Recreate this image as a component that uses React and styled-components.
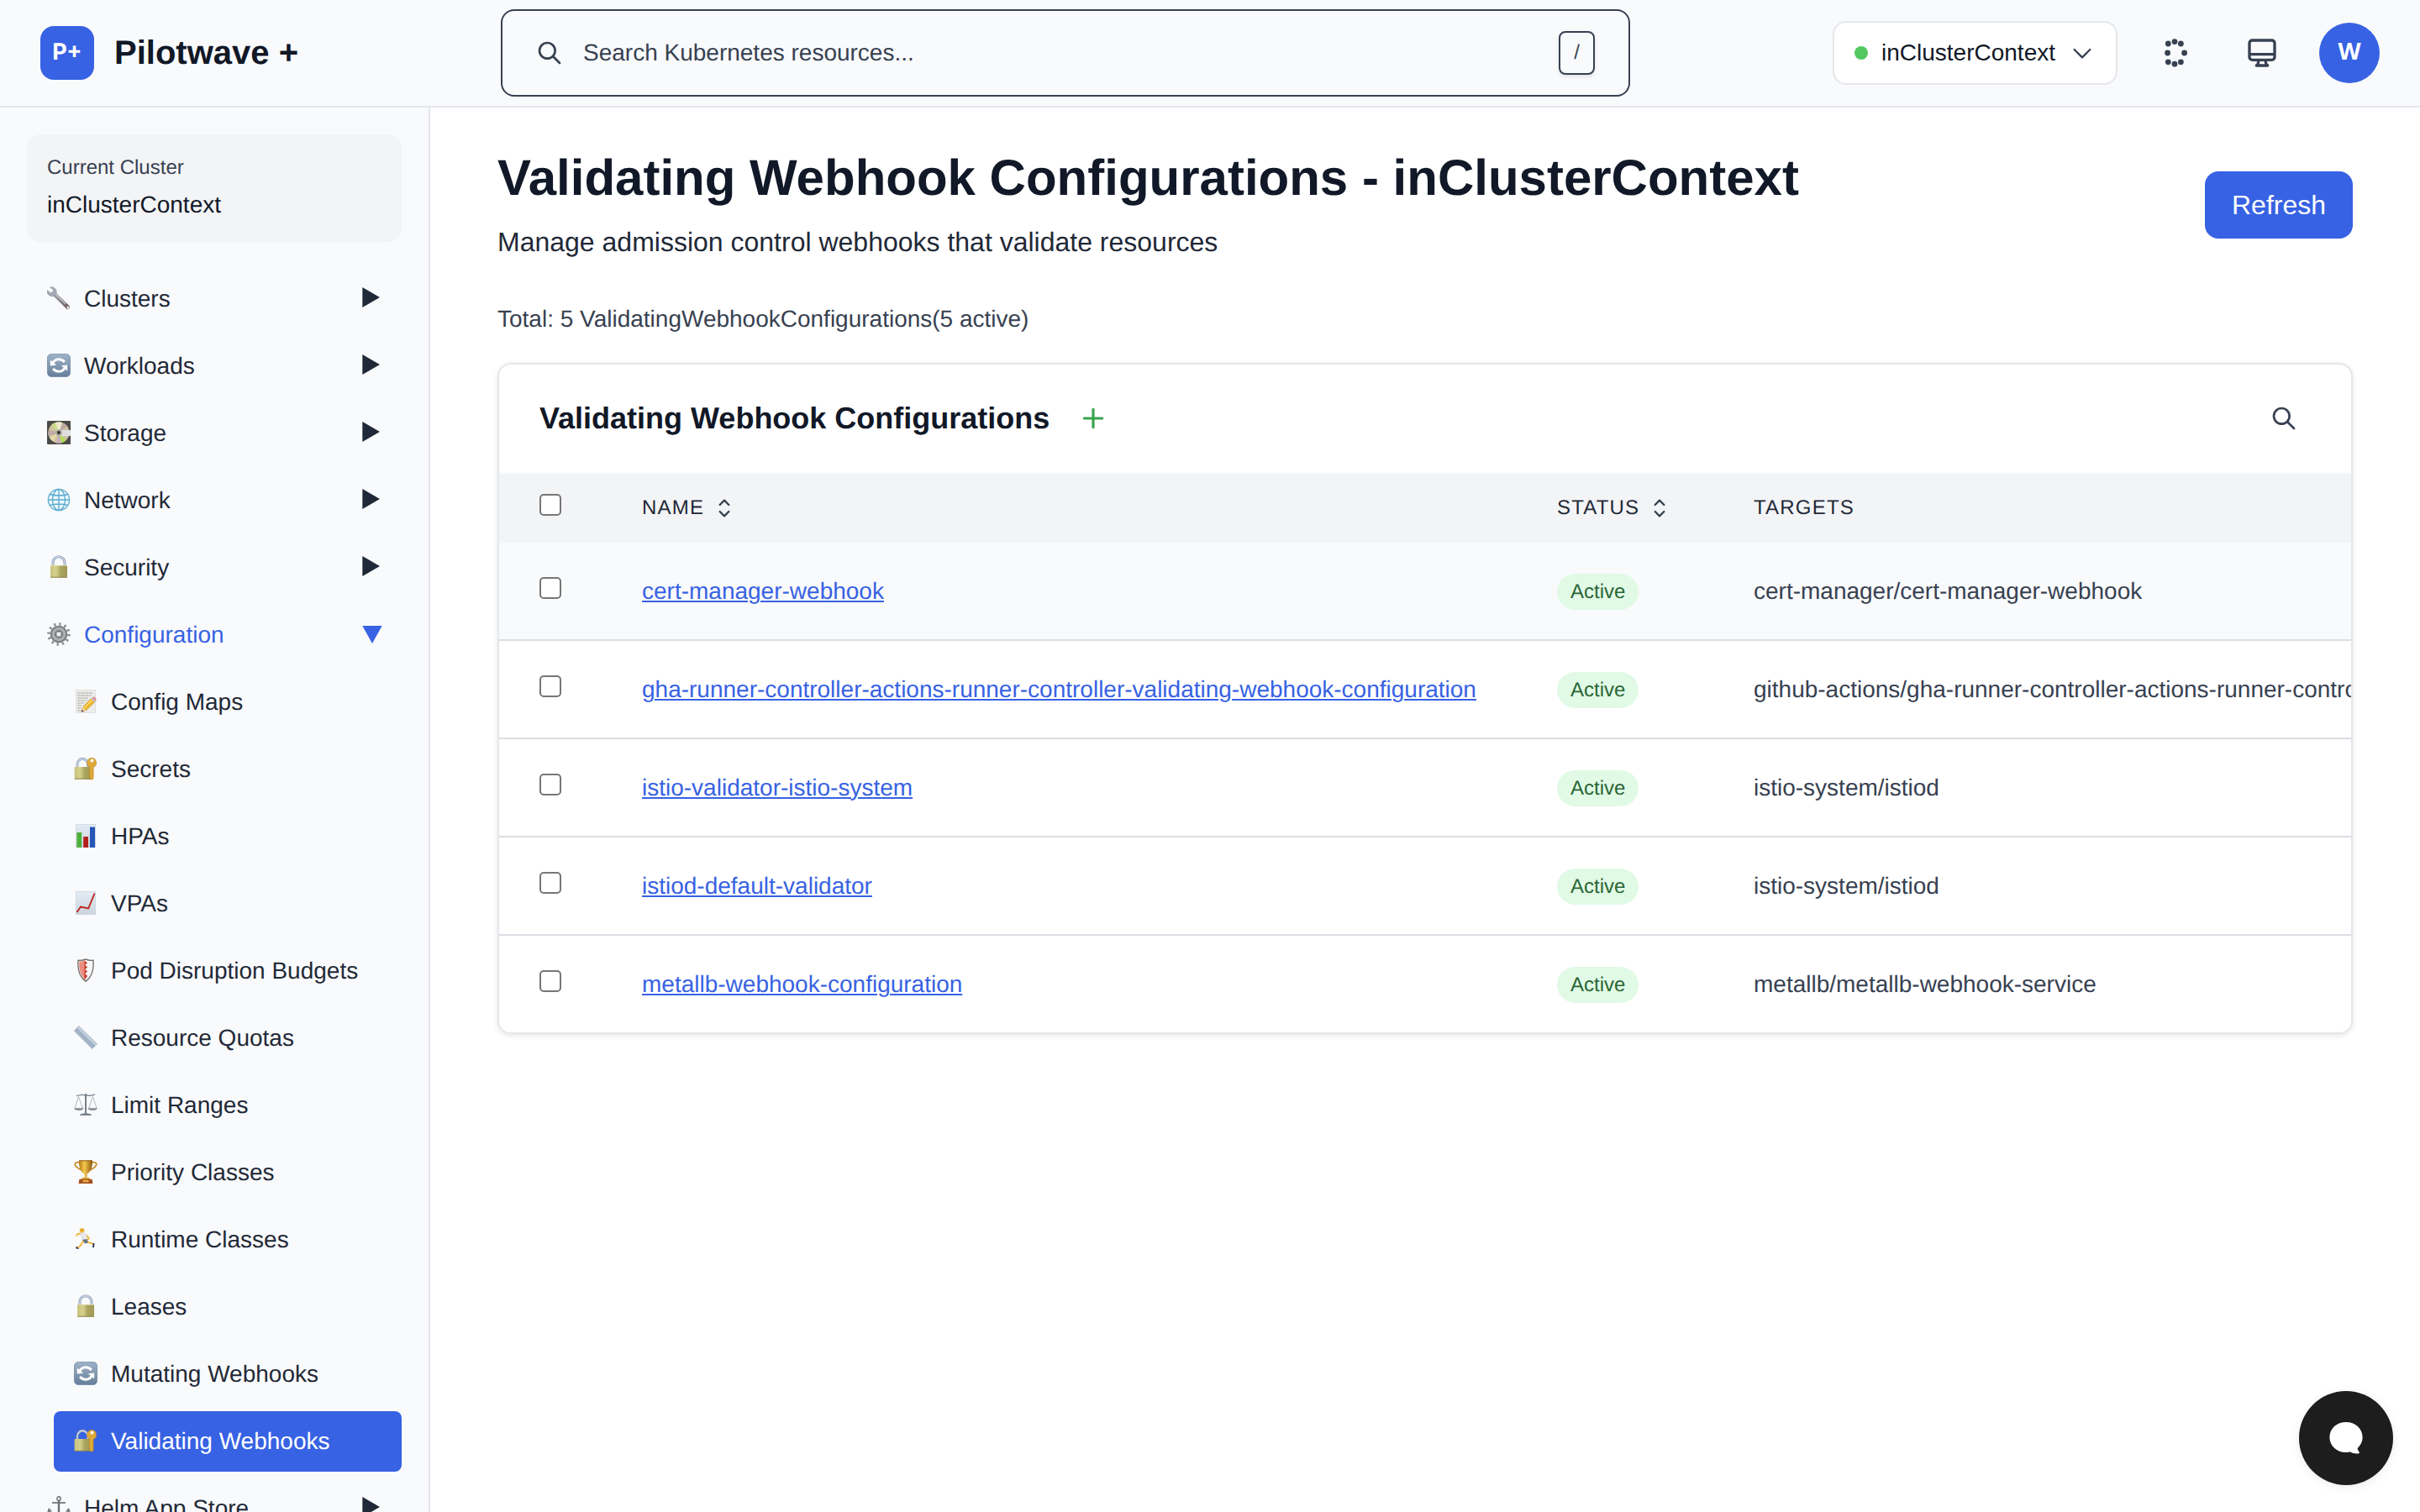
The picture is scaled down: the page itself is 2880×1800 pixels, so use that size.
import React from "react";
import styled, { createGlobalStyle, css } from "styled-components";

const GlobalStyle = createGlobalStyle`
  *, *::before, *::after { box-sizing: border-box; }
  html, body { margin: 0; padding: 0; background: #fff; }
  body {
    font-family: "Liberation Sans", Arial, sans-serif;
    font-size: 28px;
    line-height: 40px;
    color: #1f2937;
    text-rendering: geometricPrecision;
    -webkit-font-smoothing: antialiased;
  }
`;

const Shell = styled.div`
  display: flex;
  flex-direction: column;
  width: 100vw;
  height: 100vh;
  overflow: hidden;
`;

/* ---------- Top bar ---------- */

const TopBar = styled.header`
  display: flex;
  align-items: center;
  flex: none;
  height: 128px;
  padding: 0 48px;
  background: #f9fafc;
  border-bottom: 2px solid #e5e7eb;
`;

const Brand = styled.div`
  display: flex;
  align-items: center;
  gap: 24px;
`;

const LogoMark = styled.div`
  display: flex;
  align-items: center;
  justify-content: center;
  width: 64px;
  height: 64px;
  padding-bottom: 3px;
  border-radius: 16px;
  background: #3762e3;
  color: #fff;
  font: 700 27px/40px Inter, sans-serif;
`;

const BrandName = styled.span`
  font-size: 40px;
  line-height: 56px;
  font-weight: 700;
  color: #111827;
`;

const SearchArea = styled.div`
  display: flex;
  flex: 1;
  justify-content: center;
`;

const SearchField = styled.div`
  display: flex;
  align-items: center;
  gap: 24px;
  width: 1344px;
  height: 104px;
  padding: 0 40px;
  border: 2px solid #374151;
  border-radius: 16px;
  color: #374151;
`;

const SearchHint = styled.span`
  flex: 1;
`;

const Key = styled.kbd`
  display: flex;
  align-items: center;
  justify-content: center;
  width: 43px;
  height: 52px;
  padding-bottom: 1px;
  border: 2px solid #374151;
  border-radius: 8px;
  background: #f9fafc;
  box-shadow: 0 2px 4px rgba(0, 0, 0, 0.1);
  font: 24px/32px "Liberation Sans", Arial, sans-serif;
`;

const TopActions = styled.div`
  display: flex;
  align-items: center;
  gap: 32px;
`;

const ContextPicker = styled.button`
  display: flex;
  align-items: center;
  gap: 16px;
  height: 76px;
  margin: 0;
  padding: 0 24px;
  border: 2px solid #e5e7eb;
  border-radius: 16px;
  background: #fff;
  color: #374151;
  font: inherit;
`;

const ContextName = styled.span`
  color: #111827;
`;

const StatusDot = styled.span`
  width: 16px;
  height: 16px;
  border-radius: 50%;
  background: #51c860;
`;

const IconButton = styled.button`
  display: flex;
  padding: 16px;
  border: 0;
  background: none;
  color: #374151;
`;

const Avatar = styled.div`
  display: flex;
  align-items: center;
  justify-content: center;
  width: 72px;
  height: 72px;
  padding-bottom: 4px;
  border-radius: 50%;
  background: #3762e3;
  color: #fff;
  font: 700 28px/40px "Open Sans", sans-serif;
`;

/* ---------- Sidebar ---------- */

const Body = styled.div`
  display: flex;
  flex: 1;
  min-height: 0;
`;

const Sidebar = styled.aside`
  flex: none;
  width: 512px;
  padding: 32px;
  background: #f9fafc;
  border-right: 2px solid #e5e7eb;
  overflow: hidden;
`;

const ClusterCard = styled.div`
  height: 128px;
  margin-bottom: 32px;
  padding: 24px;
  border-radius: 16px;
  background: #f3f4f6;
`;

const ClusterLabel = styled.div`
  margin-bottom: 8px;
  font-size: 24px;
  line-height: 32px;
  color: #374151;
`;

const ClusterName = styled.div`
  color: #111827;
`;

const Nav = styled.nav`
  display: flex;
  flex-direction: column;
  gap: 8px;
`;

const NavRow = styled.a`
  display: flex;
  align-items: center;
  height: 72px;
  margin-left: ${(p) => (p.$nested ? "32px" : "0")};
  padding: 0 23px 0 24px;
  border-radius: 8px;
  color: ${(p) => (p.$open ? "#3762e3" : "#1f2937")};
  ${(p) =>
    p.$current &&
    css`
      background: #3762e3;
      color: #fff;
    `}
`;

const NavIcon = styled.svg`
  flex: none;
  width: 28px;
  height: 28px;
  margin: 0 16px 3px 0;
`;

const NavText = styled.span`
  flex: 1;
  white-space: nowrap;
`;

const Caret = styled.svg`
  flex: none;
  width: 24px;
  height: 24px;
  margin-bottom: 4px;
`;

/* ---------- Page ---------- */

const Page = styled.main`
  flex: 1;
  min-width: 0;
  padding: 48px 80px;
`;

const PageHead = styled.div`
  display: flex;
  align-items: center;
  justify-content: space-between;
  margin-bottom: 48px;
`;

const PageTitle = styled.h1`
  margin: 0 0 16px;
  font-size: 60px;
  line-height: 72px;
  font-weight: 700;
  color: #111827;
`;

const PageLead = styled.p`
  margin: 0;
  font-size: 32px;
  line-height: 48px;
`;

const RefreshButton = styled.button`
  height: 80px;
  width: 176px;
  padding: 0;
  border: 0;
  border-radius: 16px;
  background: #3762e3;
  color: #fff;
  font: 32px/48px "Liberation Sans", Arial, sans-serif;
`;

const Summary = styled.p`
  margin: 0 0 32px;
  color: #374151;
`;

const Card = styled.section`
  border: 2px solid #e5e7eb;
  border-radius: 16px;
  background: #fff;
  box-shadow: 0 2px 6px rgba(0, 0, 0, 0.1);
  overflow: hidden;
`;

const CardHead = styled.div`
  display: flex;
  align-items: center;
  height: 130px;
  padding: 0 64px 0 48px;
  border-bottom: 2px solid #f9fafb;
  color: #374151;
`;

const CardTitle = styled.h2`
  margin: 0 36px 0 0;
  font-size: 36px;
  line-height: 56px;
  font-weight: 700;
  color: #111827;
`;

const AddButton = styled.button`
  display: flex;
  margin-right: auto;
  padding: 0;
  border: 0;
  background: none;
  color: #38a44c;
`;

const tableColumns = css`
  display: grid;
  grid-template-columns: 122px 1089px 234px 1fr;
  padding-left: 48px;
`;

const HeadRow = styled.div`
  ${tableColumns}
  height: 82px;
  padding-top: 25px;
  background: #f3f4f6;
  font-size: 24px;
  line-height: 32px;
  letter-spacing: 0.05em;
`;

const HeadCell = styled.div`
  display: flex;
  align-items: center;
  gap: 8px;
  height: 32px;
  svg {
    color: #374151;
  }
`;

const Row = styled.div`
  ${tableColumns}
  height: 117px;
  padding-top: 38px;
  background: ${(p) => (p.$hovered ? "#f9fafc" : "#fff")};
  border-bottom: 2px solid #dcdde3;
  &:last-child {
    height: 115px;
    border-bottom: 0;
  }
`;

const Box = styled.input.attrs({ type: "checkbox" })`
  appearance: none;
  display: block;
  width: 26px;
  height: 26px;
  margin: ${(p) => (p.$head ? "-1px" : "3px")} 0 0;
  border: 2px solid #767676;
  border-radius: 5px;
  background: #fff;
`;

const NameLink = styled.a`
  color: #3762e3;
  text-decoration: underline;
  text-decoration-thickness: 2px;
  text-underline-offset: 2px;
`;

const Badge = styled.span`
  display: block;
  width: fit-content;
  height: 43px;
  margin-top: -1px;
  padding: 6px 16px 5px;
  border-radius: 22px;
  background: #e1fae6;
  color: #2b6636;
  font-size: 24px;
  line-height: 32px;
`;

const Target = styled.div`
  color: #374151;
  white-space: nowrap;
`;

const ChatButton = styled.button`
  position: fixed;
  right: 32px;
  bottom: 32px;
  display: flex;
  align-items: center;
  justify-content: center;
  width: 112px;
  height: 112px;
  padding: 0;
  border: 0;
  border-radius: 50%;
  background: #1d1d1d;
  box-shadow: 0 2px 12px rgba(0, 0, 0, 0.08);
`;

/* ---------- Line icons ---------- */

const Line = ({ d, size = 32, weight = 2 }) => (
  <svg width={size} height={size} viewBox="0 0 24 24" fill="none" stroke="currentColor" strokeWidth={weight} strokeLinecap="round" strokeLinejoin="round">
    <path d={d} />
  </svg>
);

const PATHS = {
  search: "M21 21l-6-6m2-5a7 7 0 11-14 0 7 7 0 0114 0z",
  chevron: "M19 9l-7 7-7-7",
  plus: "M12 4v16m8-8H4",
  sort: "M8 9l4-4 4 4m0 6l-4 4-4-4",
  monitor:
    "M9.75 17L9 20l-1 1h8l-1-1-.75-3M3 13h18M5 17h14a2 2 0 002-2V5a2 2 0 00-2-2H5a2 2 0 00-2 2v10a2 2 0 002 2z",
};

const DOTS = [
  [20, 6.6], [12.3, 9], [27.4, 9], [11.6, 20], [31.6, 20], [12.3, 30.8], [27.4, 30.8], [20, 33.2],
];

const DotRing = () => (
  <svg width="40" height="40" viewBox="0 0 40 40" fill="currentColor">
    {DOTS.map(([x, y]) => (
      <circle key={`${x}-${y}`} cx={x} cy={y} r="3.4" />
    ))}
  </svg>
);

/* ---------- Sidebar pictograms, 28 x 28 ---------- */

const GradientDefs = styled.svg`
  position: absolute;
`;

const Gradients = () => (
  <GradientDefs width="0" height="0" aria-hidden="true">
    <defs>
      <linearGradient id="steel" x1="0" y1="0" x2="0" y2="1">
        <stop offset="0" stopColor="#9fb3c8" />
        <stop offset="1" stopColor="#667f9b" />
      </linearGradient>
      <linearGradient id="brass" x1="0" y1="0" x2="1" y2="0">
        <stop offset="0" stopColor="#c9c47f" />
        <stop offset="0.35" stopColor="#d4d08c" />
        <stop offset="0.6" stopColor="#aca562" />
        <stop offset="1" stopColor="#a09853" />
      </linearGradient>
      <linearGradient id="gold" x1="0" y1="0" x2="1" y2="0">
        <stop offset="0" stopColor="#b57512" />
        <stop offset="0.4" stopColor="#f3c84e" />
        <stop offset="1" stopColor="#8f560b" />
      </linearGradient>
      <linearGradient id="paper" x1="0" y1="0" x2="0" y2="1">
        <stop offset="0" stopColor="#e3ecf4" />
        <stop offset="1" stopColor="#cbd4dd" />
      </linearGradient>
      <linearGradient id="wrench" gradientUnits="userSpaceOnUse" x1="4" y1="4" x2="26" y2="26">
        <stop offset="0" stopColor="#a9b0b8" />
        <stop offset="0.5" stopColor="#8d8d93" />
        <stop offset="1" stopColor="#6b5a58" />
      </linearGradient>
    </defs>
  </GradientDefs>
);

const cycle = (
  <>
    <rect x="0.4" y="0.4" width="27.2" height="27.2" rx="5" fill="url(#steel)" stroke="#6d86a1" strokeWidth="0.8" />
    <path d="M6.2 12.5C7.6 8.6 10.6 6.8 14 6.8c3 0 5.2 1.2 6.8 3.2" fill="none" stroke="#fff" strokeWidth="2.9" />
    <path d="M3.8 7.4v7.2l7.4-.8z" fill="#fff" />
    <path d="M21.8 15.5c-1.4 3.9-4.4 5.7-7.8 5.7-3 0-5.2-1.2-6.8-3.2" fill="none" stroke="#fff" strokeWidth="2.9" />
    <path d="M24.2 20.6v-7.2l-7.4.8z" fill="#fff" />
  </>
);

const lock = (
  <>
    <path d="M7 12.5V9a7 7.2 0 0 1 14 0v3.5" fill="none" stroke="#8f9fb8" strokeWidth="3" />
    <path d="M7 12.5V9a7 7.2 0 0 1 14 0v3.5" fill="none" stroke="#cdd7e6" strokeWidth="1.4" />
    <rect x="4" y="12" width="20" height="14.6" rx="0.8" fill="url(#brass)" />
    <path d="M4 26.2h20" stroke="#857d42" strokeWidth="0.9" />
    <path d="M4 12.4h20" stroke="#dedaa3" strokeWidth="0.8" />
  </>
);

const lockKey = (
  <>
    <path d="M4 12.5V9a6 6.5 0 0 1 12.5 0v3.5" fill="none" stroke="#8f9fb8" strokeWidth="2.8" />
    <path d="M4 12.5V9a6 6.5 0 0 1 12.5 0v3.5" fill="none" stroke="#cdd7e6" strokeWidth="1.3" />
    <rect x="0.6" y="12" width="20" height="14.4" rx="0.8" fill="url(#brass)" />
    <path d="M0.8 26.2h20" stroke="#857d42" strokeWidth="0.9" />
    <path d="M21.5 1.2a6 6 0 0 0-2.6 11.300v3l-1.200 1.300 1.200 1.200-1 1.300 1 1.200-1 1.300 1 1.200v2.700l2 1.600 2.200-1.600V12.600A6 6 0 0 0 21.500 1.200z" fill="#dfa93a" stroke="#b57f1d" strokeWidth="0.6" />
    <circle cx="21.5" cy="4.6" r="2" fill="#f9fafc" />
  </>
);

const PICTOS = {
  wrench: (
    <>
      <path d="M8 8.5 24.5 24.5" stroke="url(#wrench)" strokeWidth="5" strokeLinecap="round" />
      <path d="M8.5 7.6 22 20.8" stroke="#c9cdd3" strokeWidth="1.3" />
      <path d="M3.6 0.8C7 .2 10.5 2 11.2 5.6c.5 2.8-1 5-3.2 5.8C4.8 12.4.8 10.6.2 6.8L.4 4.6l3.4 3.2 3-.8.8-2.8z" fill="#a4abb4" stroke="#858c95" strokeWidth="0.6" />
      <circle cx="25" cy="25" r="1.5" fill="#f1f2f4" />
    </>
  ),
  cycle,
  disc: (
    <>
      <rect width="28" height="28" rx="1" fill="#4b4a48" />
      <circle cx="14" cy="14" r="12.6" fill="#cfc3a0" />
      <path d="M14 14 5 5.2A12.6 12.6 0 0 1 10 2z" fill="#c8dd8a" />
      <path d="M14 14 10 2a12.6 12.6 0 0 1 8 0z" fill="#efe9cf" />
      <path d="M14 14 2 18a12.6 12.6 0 0 1-.3-7z" fill="#bfa9a6" />
      <path d="M14 14 7 24.5A12.6 12.6 0 0 1 3 20z" fill="#e4dba8" />
      <path d="M14 14 22.5 23.3A12.6 12.6 0 0 1 17 26.2z" fill="#b3dc5a" />
      <path d="M14 14 17 26.2a12.6 12.6 0 0 1-6 0z" fill="#cbb0bd" />
      <path d="M14 14 19 2.6a12.6 12.6 0 0 1 5 4z" fill="#b9a7a0" />
      <path d="M16 11h12v7H16z" fill="#dedfe0" />
      <circle cx="14" cy="14" r="3.8" fill="#a9a89a" />
      <circle cx="14" cy="14" r="1.9" fill="#2e2c2b" />
    </>
  ),
  globe: (
    <>
      <circle cx="14" cy="14" r="12.6" fill="#eaf7fc" stroke="#6fb6d6" strokeWidth="1.5" />
      <g fill="none" stroke="#5aa9cd" strokeWidth="1.3">
        <ellipse cx="14" cy="14" rx="7.5" ry="12.6" />
        <path d="M14 1.4v25.2M1.4 14h25.2M3.2 7.5q10.8 3 21.6 0M3.2 20.5q10.8-3 21.6 0" />
      </g>
    </>
  ),
  lock,
  gear: (
    <>
      <circle cx="14" cy="14" r="12" fill="none" stroke="#8a8c8e" strokeWidth="3.6" strokeDasharray="2.3 3.983" />
      <circle cx="14" cy="14" r="8.6" fill="#a0a4a8" stroke="#7b7f83" strokeWidth="3.4" />
      <circle cx="14" cy="14" r="7.2" fill="none" stroke="#b4b8bb" strokeWidth="1.6" />
      <circle cx="14" cy="14" r="3.8" fill="#c7cacd" stroke="#5b5f63" strokeWidth="1.2" />
      <circle cx="14" cy="14" r="1.7" fill="#f5f6f7" />
    </>
  ),
  memo: (
    <>
      <rect x="2.3" y="0.3" width="23.4" height="27.4" fill="#ececea" stroke="#d6d6d4" strokeWidth="0.6" />
      <path d="M4.5 4h18M4.5 7h16M4.5 10h13M4.5 13h11M4.5 16h8M4.5 19h5M4.5 22h4M4.5 25h4" stroke="#8b8b89" strokeWidth="0.9" strokeDasharray="2.2 0.8 1.3 0.7" />
      <path d="M9 26.5l1.6-5.8L21.3 10l4 4L14.6 24.6z" fill="#f0b72c" stroke="#b07c16" strokeWidth="0.6" />
      <path d="M11.8 22 22.6 11.3" stroke="#fbdc6c" strokeWidth="1.4" />
      <path d="M9 26.5l1.6-5.8 4 3.9z" fill="#ecd3a4" />
      <path d="M9 26.5l.7-2.4 1.7 1.7z" fill="#333" />
      <path d="M20.4 10.9l1.4-1.4 4 4-1.4 1.4z" fill="#b8c0c6" />
      <path d="M21.8 9.5c1.2-1.3 2.6-1.3 3.8-.1 1.3 1.3 1.3 2.8.2 4.1z" fill="#e58a8c" />
    </>
  ),
  lockKey,
  bars: (
    <>
      <rect x="2.3" y="0.3" width="23.4" height="27.4" fill="url(#paper)" stroke="#c5ced7" strokeWidth="0.6" />
      <rect x="3.4" y="10" width="5.8" height="18" fill="#4cb03c" />
      <rect x="11.2" y="15" width="5.8" height="13" fill="#b3211e" />
      <rect x="19" y="3.6" width="6" height="24.4" fill="#2456b8" />
    </>
  ),
  trend: (
    <>
      <rect x="2.3" y="0.3" width="23.4" height="27.4" fill="url(#paper)" stroke="#c5ced7" strokeWidth="0.6" />
      <path d="M3.5 25 8 18.5l9.2 2L24.6 2.5" fill="none" stroke="#bd2320" strokeWidth="1.9" />
    </>
  ),
  shield: (
    <>
      <path d="M14 .8c3 1.5 6 1.8 9 1.4.8 9.5-1 19.5-9 25.2C6 21.7 4.2 11.7 5 2.2 8 2.6 11 2.3 14 .8z" fill="#f4f4f4" stroke="#6f6c6b" strokeWidth="1.3" />
      <path d="M13.5 2.2c-2.5 1.2-4.7 1.5-7.2 1.3-.5 8.7 1.2 17 7.2 22.2z" fill="#e98d7f" />
      <path d="M12.5 2.5l3.6 3-3 2 3 3-3 2.5 3 2.5-3 2.5 3 3-3.600 4.500z" fill="#c7402f" />
    </>
  ),
  ruler: (
    <>
      <path d="M5.8.5 27.6 21.7l-5.8 5.8L.4 6.3z" fill="#a8b8cb" stroke="#8b9cb1" strokeWidth="0.6" />
      <path d="M5.8.8 27.3 21.7l-1.8 1.8L4 2.6z" fill="#c5d1df" />
      <path d="M2.6 4.2 24 25.2" stroke="#8f9fb5" strokeWidth="0.8" />
    </>
  ),
  scales: (
    <g fill="none" stroke="#77818b">
      <path d="M14 1v24" strokeWidth="2" />
      <path d="M3 3.8c4-2.2 7-1.8 11-1s7 1.2 11-1" strokeWidth="1.3" />
      <path d="M5.5 4.5.9 18.5M5.5 4.5l5 14M22.5 4.5l-5 14M22.5 4.5l4.6 14" stroke="#a9b0b8" strokeWidth="0.9" />
      <path d="M.4 18.4h10.8c-1 3-9.800 3-10.800 0zM16.800 18.400h10.800c-1 3-9.800 3-10.800 0z" fill="#7e8993" strokeWidth="0.5" />
      <path d="M7 26.5c1.5-2.2 12.5-2.2 14 0z" fill="#6e7780" strokeWidth="0.8" />
    </g>
  ),
  trophy: (
    <>
      <path d="M8 3.5C4.500 1.800 1 2.600 1.300 5.300c.4 3.500 4.200 4.900 8.700 7M20 3.500c3.500-1.700 7-.9 6.700 1.800-.4 3.500-4.200 4.900-8.700 7" fill="none" stroke="#c58a26" strokeWidth="1.7" />
      <path d="M6 .4h16c.3 7-1.5 13.6-6.4 15.8v4.6h-3.2v-4.6C7.5 14 5.7 7.4 6 .4z" fill="url(#gold)" />
      <path d="M6.2.8h15.6" stroke="#8a5308" strokeWidth="0.9" />
      <path d="M9.8 21h8.4l.8 2.2H9z" fill="#d99a2e" />
      <path d="M6.5 22.8h15L22.5 28h-17z" fill="#a5511c" />
      <path d="M10.5 23.8h7v2.5h-7z" fill="#e8b04e" />
    </>
  ),
  runner: (
    <>
      <circle cx="9.6" cy="4" r="2.7" fill="#f3b93a" />
      <path d="M6.5 3.5C7 1.5 9.5.8 12 2l.3 2.5-3-.8z" fill="#dfa42a" />
      <path d="M7.6 7.5 4 8.200l-.8 1.600M15 9.500l3 4-3 1.500" fill="none" stroke="#f3b93a" strokeWidth="1.9" strokeLinecap="round" strokeLinejoin="round" />
      <path d="M7.5 7.2c2.5-1 5.8-.3 7.5 1.6l.6 6.2-5.4.8-.9-4z" fill="#e8e9eb" stroke="#c4c7cb" strokeWidth="0.5" />
      <path d="M16.2 17.6l6.5 2.2M11 16.5l-3 5.3-4.5 2.500" fill="none" stroke="#f3b93a" strokeWidth="2" strokeLinecap="round" strokeLinejoin="round" />
      <path d="M10 14.8l5.800-.6 1.200 4-4 1.200z" fill="#6c7178" />
      <path d="M22.6 18.8l2 .4-.8 5-1.8-.2zM2.2 22.8l1.9 1 2.6 1.6-4 .3z" fill="#2c3768" />
    </>
  ),
  anchor: (
    <g fill="none" stroke="#6e7073">
      <circle cx="14" cy="3" r="2.2" strokeWidth="1.4" />
      <path d="M14 5.2V26" strokeWidth="2.4" />
      <path d="M6 8h16" strokeWidth="1.7" />
      <path d="M2.5 17c.8 6 5.5 9 11.5 10 6-1 10.700-4 11.500-10" strokeWidth="1.9" />
      <path d="M.8 19.5l1.5-4.300 3 3.300M27.200 19.500l-1.500-4.300-3 3.300" strokeWidth="1.2" />
    </g>
  ),
};

const NAV = [
  { icon: "wrench", label: "Clusters", caret: true },
  { icon: "cycle", label: "Workloads", caret: true },
  { icon: "disc", label: "Storage", caret: true },
  { icon: "globe", label: "Network", caret: true },
  { icon: "lock", label: "Security", caret: true },
  { icon: "gear", label: "Configuration", caret: true, open: true },
  { icon: "memo", label: "Config Maps", nested: true },
  { icon: "lockKey", label: "Secrets", nested: true },
  { icon: "bars", label: "HPAs", nested: true },
  { icon: "trend", label: "VPAs", nested: true },
  { icon: "shield", label: "Pod Disruption Budgets", nested: true },
  { icon: "ruler", label: "Resource Quotas", nested: true },
  { icon: "scales", label: "Limit Ranges", nested: true },
  { icon: "trophy", label: "Priority Classes", nested: true },
  { icon: "runner", label: "Runtime Classes", nested: true },
  { icon: "lock", label: "Leases", nested: true },
  { icon: "cycle", label: "Mutating Webhooks", nested: true },
  { icon: "lockKey", label: "Validating Webhooks", nested: true, current: true },
  { icon: "anchor", label: "Helm App Store", caret: true },
];

const ROWS = [
  ["cert-manager-webhook", "cert-manager/cert-manager-webhook"],
  [
    "gha-runner-controller-actions-runner-controller-validating-webhook-configuration",
    "github-actions/gha-runner-controller-actions-runner-controller-webhook",
  ],
  ["istio-validator-istio-system", "istio-system/istiod"],
  ["istiod-default-validator", "istio-system/istiod"],
  ["metallb-webhook-configuration", "metallb/metallb-webhook-service"],
];

const NavItem = ({ icon, label, caret, open, nested, current }) => (
  <NavRow $nested={nested} $open={open} $current={current}>
    <NavIcon viewBox="0 0 28 28">{PICTOS[icon]}</NavIcon>
    <NavText>{label}</NavText>
    {caret && (
      <Caret viewBox="0 0 24 24" fill="currentColor">
        <path d={open ? "M.3 3h23.4L12 24z" : "M.3 0v24L21 12z"} />
      </Caret>
    )}
  </NavRow>
);

export default function App() {
  return (
    <Shell>
      <GlobalStyle />
      <Gradients />
      <TopBar>
        <Brand>
          <LogoMark>P+</LogoMark>
          <BrandName>Pilotwave +</BrandName>
        </Brand>
        <SearchArea>
          <SearchField>
            <Line d={PATHS.search} />
            <SearchHint>Search Kubernetes resources...</SearchHint>
            <Key>/</Key>
          </SearchField>
        </SearchArea>
        <TopActions>
          <ContextPicker>
            <StatusDot />
            <ContextName>inClusterContext</ContextName>
            <Line d={PATHS.chevron} weight={1.75} />
          </ContextPicker>
          <IconButton aria-label="Activity">
            <DotRing />
          </IconButton>
          <IconButton aria-label="Theme">
            <Line d={PATHS.monitor} size={40} />
          </IconButton>
          <Avatar>W</Avatar>
        </TopActions>
      </TopBar>
      <Body>
        <Sidebar>
          <ClusterCard>
            <ClusterLabel>Current Cluster</ClusterLabel>
            <ClusterName>inClusterContext</ClusterName>
          </ClusterCard>
          <Nav>
            {NAV.map((item) => (
              <NavItem key={item.label} {...item} />
            ))}
          </Nav>
        </Sidebar>
        <Page>
          <PageHead>
            <div>
              <PageTitle>Validating Webhook Configurations - inClusterContext</PageTitle>
              <PageLead>Manage admission control webhooks that validate resources</PageLead>
            </div>
            <RefreshButton>Refresh</RefreshButton>
          </PageHead>
          <Summary>Total: 5 ValidatingWebhookConfigurations(5 active)</Summary>
          <Card>
            <CardHead>
              <CardTitle>Validating Webhook Configurations</CardTitle>
              <AddButton aria-label="Add">
                <Line d={PATHS.plus} weight={2.4} />
              </AddButton>
              <Line d={PATHS.search} />
            </CardHead>
            <HeadRow>
              <Box $head />
              <HeadCell>
                NAME
                <Line d={PATHS.sort} weight={1.75} />
              </HeadCell>
              <HeadCell>
                STATUS
                <Line d={PATHS.sort} weight={1.75} />
              </HeadCell>
              <HeadCell>TARGETS</HeadCell>
            </HeadRow>
            <div>
              {ROWS.map(([name, target], i) => (
                <Row key={name} $hovered={i === 0}>
                  <Box />
                  <div>
                    <NameLink>{name}</NameLink>
                  </div>
                  <div>
                    <Badge>Active</Badge>
                  </div>
                  <Target>{target}</Target>
                </Row>
              ))}
            </div>
          </Card>
        </Page>
      </Body>
      <ChatButton aria-label="Chat">
        <svg width="40" height="38" viewBox="0 0 40 38" fill="#fff">
          <path d="M20 0c11 0 19.6 7.6 19.6 17.8 0 5.6-2.3 10-6 13.2.2 1.8.8 3 1.9 4.2.7.9.2 2.200-.9 2.300-3.600.3-6.700-.2-9.400-1.900-1.700.3-3.400.4-5.200.4C8.800 36 .4 28 .4 17.900.4 7.700 9 0 20 0z" />
        </svg>
      </ChatButton>
    </Shell>
  );
}
